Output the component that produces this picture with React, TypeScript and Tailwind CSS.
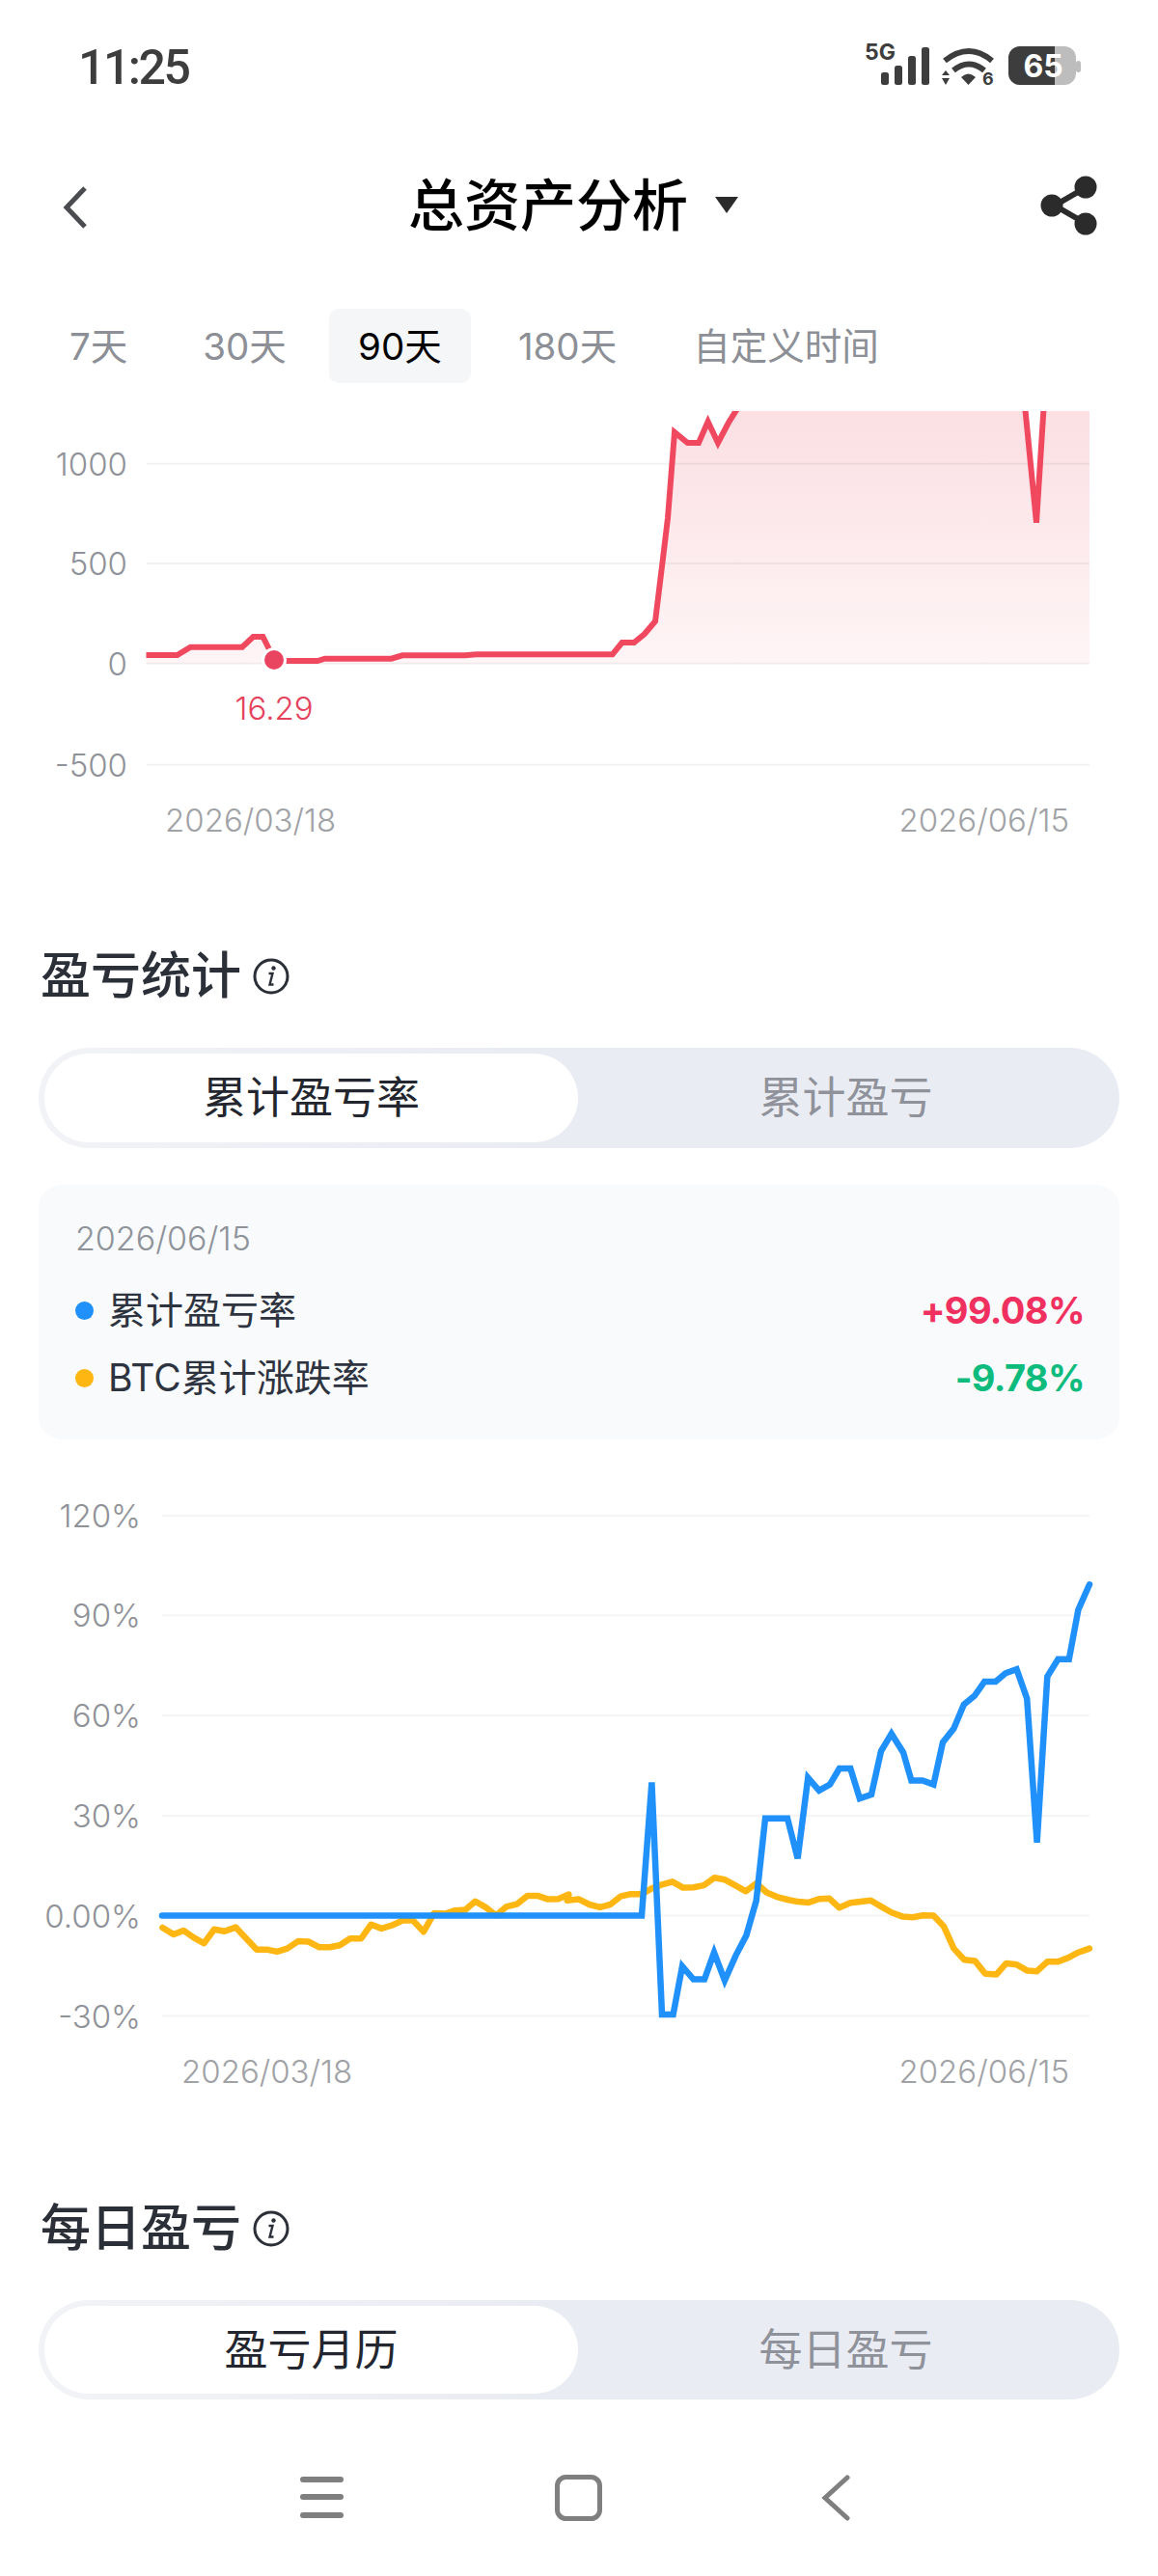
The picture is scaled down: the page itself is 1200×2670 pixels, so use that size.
import React from "react"

// points read off the reference, page coordinates
const redLeft = [[151.5, 679], [183.6, 679], [197.4, 670.7], [251, 670.7], [262.4, 660], [272.4, 660], [284, 683]]
const redRight = [
    [284, 685], [329, 685], [336.6, 682.7], [405.5, 682.7], [417, 679.3], [482, 679.3], [493.5, 678.3], [634.6, 678.3],
    [644.6, 666], [657, 666], [668, 657], [679, 644], [686, 587], [692, 537], [699, 448], [712.5, 459], [724, 459],
    [733.6, 437], [744, 459], [755, 438], [765, 422], [780, 400], [1060, 400], [1074, 541.7], [1083, 400],
]

const blue = [
    [168, 1985.6], [665, 1985.6], [675.4, 1847.5], [686, 2088], [697.6, 2088], [707, 2038], [718.6, 2051.5], [730, 2051.5],
    [740, 2023.7], [751, 2052.8], [762.6, 2026.6], [773.4, 2006], [783.7, 1970], [793, 1884.8], [816, 1884.8], [826.6, 1926.3],
    [837.3, 1842.6], [848.8, 1855.8], [860, 1849.6], [869.8, 1833], [881.3, 1833], [890.9, 1864], [903, 1860], [913, 1815],
    [923.8, 1797], [936, 1816.4], [944.4, 1845.5], [956, 1845.5], [967.4, 1849.6], [977, 1806], [988.4, 1791.6], [998.8, 1766.7],
    [1010, 1757.6], [1020.2, 1743], [1031.7, 1743], [1042, 1734.3], [1053.5, 1730.2], [1064.2, 1760.5], [1074.6, 1909.7],
    [1085.3, 1737.7], [1096.4, 1719.8], [1107.8, 1719.8], [1117.4, 1668.4], [1129, 1642.3],
]

// yellow line is in zoomed crop coordinates, converted below
const yellowA = [
    [440, 1153], [470, 1170], [497, 1160], [525, 1178], [552, 1192], [580, 1157], [608, 1162], [638, 1152], [695, 1208], [725, 1208],
    [750, 1213], [778, 1205], [807, 1187], [835, 1188], [865, 1202], [893, 1202], [920, 1197], [948, 1180], [978, 1180], [1005, 1145],
    [1033, 1155], [1062, 1147], [1090, 1135], [1118, 1135], [1147, 1163], [1175, 1117], [1205, 1118], [1232, 1110], [1260, 1108],
    [1287, 1087], [1315, 1102], [1343, 1122], [1372, 1100], [1400, 1094], [1428, 1073], [1456, 1073], [1484, 1082], [1512, 1081],
    [1540, 1070],
]
const yellowB = [
    [-32, 1085], [0, 1082], [28, 1095], [57, 1102], [85, 1095], [112, 1075], [140, 1069], [170, 1069], [197, 1055], [225, 1045], [253, 1038],
    [282, 1053], [310, 1052], [338, 1047], [367, 1028], [395, 1033], [423, 1047], [452, 1062], [480, 1042], [508, 1065], [536, 1076],
    [565, 1083], [593, 1088], [622, 1090], [650, 1081], [678, 1080], [705, 1103], [735, 1091], [763, 1088], [790, 1085], [818, 1100],
    [846, 1115], [875, 1125], [903, 1127], [932, 1122], [960, 1123], [988, 1150], [1015, 1205], [1043, 1233], [1072, 1236], [1100, 1268],
    [1130, 1270], [1157, 1242], [1185, 1245], [1213, 1260], [1240, 1262], [1268, 1238], [1297, 1238], [1325, 1228], [1352, 1215], [1382, 1205],
]
const yellow = [
    ...yellowA.map(([x, y]) => [x / 2.613, y / 2.412 + 1520]),
    ...yellowB.map(([x, y]) => [x / 2.613 + 600, y / 2.412 + 1520]),
]

const toPoints = (pts: number[][]) => pts.map(([x, y]) => `${x.toFixed(1)},${y.toFixed(1)}`).join(" ")

function StatusIcons() {
    return (
        <svg width="232" height="60" viewBox="-4 -6 232 60" className="text-[#3d3d3d]">
            <text x="0" y="20" fontSize="23" fontWeight="700" fill="currentColor">5G</text>
            <rect x="17" y="33" width="8" height="13" rx="2.5" fill="currentColor" />
            <rect x="31" y="26" width="8" height="20" rx="2.5" fill="currentColor" />
            <rect x="45" y="16" width="8" height="30" rx="2.5" fill="currentColor" />
            <rect x="59" y="7" width="8" height="39" rx="2.5" fill="currentColor" />
            <path d="M83 21 Q108 1 132 21" fill="none" stroke="currentColor" strokeWidth="6" />
            <path d="M92 31 Q108 18 124 31" fill="none" stroke="currentColor" strokeWidth="6" />
            <path d="M100 38 Q107.5 31 115 38 L107.5 46 Z" fill="currentColor" />
            <path d="M84 31 L88 36 H80 Z M84 46 L80 39 H88 Z" fill="currentColor" />
            <text x="122" y="46" fontSize="18" fontWeight="700" fill="currentColor">6</text>
            <rect x="149" y="6" width="70" height="40" rx="12" fill="#bdbdbd" />
            <path d="M161 6 H197 V46 H161 A12 12 0 0 1 149 34 V18 A12 12 0 0 1 161 6 Z" fill="#3d3d3d" />
            <rect x="219" y="21" width="5" height="12" rx="2.5" fill="#bdbdbd" />
            <text x="185" y="38" fontSize="32" fontWeight="700" fill="#ffffff" textAnchor="middle">65</text>
        </svg>
    )
}

function InfoIcon() {
    return (
        <svg width="38" height="38" viewBox="0 0 38 38" className="ml-[12px] shrink-0">
            <circle cx="19" cy="19" r="17" fill="none" stroke="#2b2f38" strokeWidth="3" />
            <circle cx="21.5" cy="10.5" r="2.2" fill="#2b2f38" />
            <path d="M16.5 16 H20.5 L17.5 27.5 H21.5" fill="none" stroke="#2b2f38" strokeWidth="2.4" />
        </svg>
    )
}

function Toggle({left, right, height}: {left: string; right: string; height: string}) {
    return (
        <div className={`mx-[40px] flex rounded-full bg-linear-to-r from-[#f2f3f6] to-[#eaecf3] to-[45%] p-[6px] ${height}`}>
            <div className="flex w-[553px] items-center justify-center rounded-full bg-white text-[45px] font-normal text-[#23262e]">
                {left}
            </div>
            <div className="flex flex-1 items-center justify-center text-[45px] font-normal text-[#8f929a]">
                {right}
            </div>
        </div>
    )
}

function SectionTitle({children}: {children: React.ReactNode}) {
    return (
        <div className="flex h-[48px] items-center pl-[42px] text-[52px] font-medium text-[#2b2f38]">
            {children}
            <InfoIcon />
        </div>
    )
}

function TopChart() {
    const grid = [[480.7, "1000"], [584, "500"], [687.7, "0"], [792.7, "-500"]] as [number, string][]
    const fill = [...redLeft, ...redRight, [1129, 400], [1129, 687.7], [151.5, 687.7]]
    return (
        <svg width="1200" height="454" viewBox="0 426 1200 454" className="block">
            <defs>
                <linearGradient id="redFill" gradientUnits="userSpaceOnUse" x1="0" y1="426" x2="0" y2="690">
                    <stop offset="0" stopColor="#fbdfe3" />
                    <stop offset="1" stopColor="#fef5f6" />
                </linearGradient>
            </defs>
            <polygon points={toPoints(fill)} fill="url(#redFill)" />
            {grid.map(([y, label]) => (
                <g key={label}>
                    <line x1="151.5" x2="1129" y1={y} y2={y} stroke="#000000" strokeOpacity="0.05" strokeWidth="2" />
                    <text x="132" y={y + 12} textAnchor="end" fontSize="33" fontWeight="300" fill="#8f9298">{label}</text>
                </g>
            ))}
            <polyline points={toPoints(redLeft)} fill="none" stroke="#f0495f" strokeWidth="6" />
            <polyline points={toPoints(redRight)} fill="none" stroke="#f0495f" strokeWidth="6" />
            <circle cx="284" cy="684" r="13" fill="#ffffff" />
            <circle cx="284" cy="684" r="10" fill="#e94560" />
            <text x="284" y="746" textAnchor="middle" fontSize="33" fontWeight="300" fill="#e5415b">16.29</text>
            <text x="171" y="862" fontSize="33" fontWeight="300" fill="#a0a2a6">2026/03/18</text>
            <text x="1108" y="862" textAnchor="end" fontSize="33" fontWeight="300" fill="#a0a2a6">2026/06/15</text>
        </svg>
    )
}

function RateChart() {
    const grid = [[1571, "120%"], [1674.2, "90%"], [1777.9, "60%"], [1882, "30%"], [1985.6, "0.00%"], [2089.6, "-30%"]] as [number, string][]
    return (
        <svg width="1200" height="630" viewBox="0 1540 1200 630" className="block">
            {grid.map(([y, label]) => (
                <g key={label}>
                    <line x1="168" x2="1129" y1={y} y2={y} stroke="#000000" strokeOpacity="0.04" strokeWidth="2" />
                    <text x="146" y={y + 12} textAnchor="end" fontSize="33" fontWeight="300" fill="#8f9298">{label}</text>
                </g>
            ))}
            <polyline points={toPoints(yellow)} fill="none" stroke="#fdb612" strokeWidth="6.5" strokeLinejoin="round" strokeLinecap="round" />
            <polyline points={toPoints(blue)} fill="none" stroke="#2090fb" strokeWidth="6.5" strokeLinejoin="miter" strokeLinecap="round" />
            <text x="188" y="2159" fontSize="33" fontWeight="300" fill="#a0a2a6">2026/03/18</text>
            <text x="1108" y="2159" textAnchor="end" fontSize="33" fontWeight="300" fill="#a0a2a6">2026/06/15</text>
        </svg>
    )
}

export default function App() {
    return (
        <div className="h-[2670px] w-[1200px] overflow-hidden bg-white [font-family:Inter,'Noto_Sans_CJK_SC',sans-serif]">
            {/* status bar */}
            <div className="flex h-[110px] items-start justify-between pl-[81px] pr-[76px] pt-[36px]">
                <span className="mt-[6px] text-[50px] font-medium leading-[56px] tracking-[-2.5px] text-[#3d3d3d] [font-family:Roboto,sans-serif]">11:25</span>
                <StatusIcons />
            </div>

            {/* nav */}
            <div className="flex h-[202px] items-center pl-[65px] pr-[62px] pt-[3px]">
                <svg width="26" height="44" viewBox="0 0 26 44" className="mt-[4px]">
                    <path d="M23 2 L4 22 L23 42" fill="none" stroke="#4a4c50" strokeWidth="5" />
                </svg>
                <div className="ml-[332px] text-[58px] font-medium leading-none text-black">总资产分析</div>
                <svg width="24" height="17" viewBox="0 0 24 17" className="ml-[28px]">
                    <path d="M0 0 H24 L12 17 Z" fill="#2b2b2b" />
                </svg>
                <svg width="60" height="62" viewBox="0 0 60 62" className="ml-auto">
                    <path d="M46 13 L15 31 L46 49" fill="none" stroke="#2b2b2b" strokeWidth="6" />
                    <circle cx="47" cy="12" r="11.5" fill="#2b2b2b" />
                    <circle cx="12" cy="31" r="11.5" fill="#2b2b2b" />
                    <circle cx="47" cy="50" r="11.5" fill="#2b2b2b" />
                </svg>
            </div>

            {/* date range tabs */}
            <div className="mt-[8px] flex h-[77px] items-center text-[38.5px] font-normal text-[#8c8f95]">
                <span className="ml-[72px] pt-[3px]">7天</span>
                <span className="ml-[78px] pt-[3px]">30天</span>
                <span className="ml-[44px] flex h-[77px] w-[147px] items-center justify-center rounded-[10px] bg-[#f4f6f8] pt-[3px] text-black">90天</span>
                <span className="ml-[49px] pt-[3px]">180天</span>
                <span className="ml-[79px] pt-[3px]">自定义时间</span>
            </div>

            <div className="mt-[29px]">
                <TopChart />
            </div>

            <div className="mt-[108px]">
                <SectionTitle>盈亏统计</SectionTitle>
            </div>
            <div className="mt-[50px]">
                <Toggle left="累计盈亏率" right="累计盈亏" height="h-[104px]" />
            </div>

            {/* legend card */}
            <div className="mx-[40px] mt-[38px] h-[264px] rounded-[24px] bg-[#f8fafc] pl-[38px] pr-[36px] pt-[38px]">
                <div className="text-[34px] font-light leading-[36px] text-[#8e9299]">2026/06/15</div>
                <div className="mt-[36px] flex h-[40px] items-center justify-between">
                    <div className="flex items-center text-[39px] font-normal text-[#2e3340]">
                        <span className="mr-[15px] h-[19px] w-[19px] rounded-full bg-[#2090fb]" />
                        累计盈亏率
                    </div>
                    <span className="text-[38px] font-bold tracking-[-0.6px] text-[#f0305f]">+99.08%</span>
                </div>
                <div className="mt-[30px] flex h-[40px] items-center justify-between">
                    <div className="flex items-center text-[39px] font-normal text-[#2e3340]">
                        <span className="mr-[15px] h-[19px] w-[19px] rounded-full bg-[#fdb612]" />
                        BTC累计涨跌率
                    </div>
                    <span className="text-[38px] font-bold tracking-[-0.6px] text-[#0dbb7d]">-9.78%</span>
                </div>
            </div>

            <div className="mt-[48px]">
                <RateChart />
            </div>

            <div className="mt-[116px]">
                <SectionTitle>每日盈亏</SectionTitle>
            </div>
            <div className="mt-[50px]">
                <Toggle left="盈亏月历" right="每日盈亏" height="h-[103px]" />
            </div>

            {/* system nav */}
            <div className="mt-[78px] flex h-[48px] items-center pl-[311px]">
                <svg width="45" height="44" viewBox="0 0 45 44">
                    <rect x="0" y="0" width="45" height="6" rx="3" fill="#7f7f7f" />
                    <rect x="0" y="18" width="45" height="6" rx="3" fill="#7f7f7f" />
                    <rect x="0" y="37" width="45" height="6" rx="3" fill="#7f7f7f" />
                </svg>
                <svg width="49" height="48" viewBox="0 0 49 48" className="ml-[219px]">
                    <rect x="2.5" y="2.5" width="44" height="43" rx="9" fill="none" stroke="#7f7f7f" strokeWidth="5" />
                </svg>
                <svg width="30" height="48" viewBox="0 0 30 48" className="ml-[227px]">
                    <path d="M27 3 L4 24 L27 45" fill="none" stroke="#7f7f7f" strokeWidth="5" strokeLinecap="round" />
                </svg>
            </div>
        </div>
    )
}
